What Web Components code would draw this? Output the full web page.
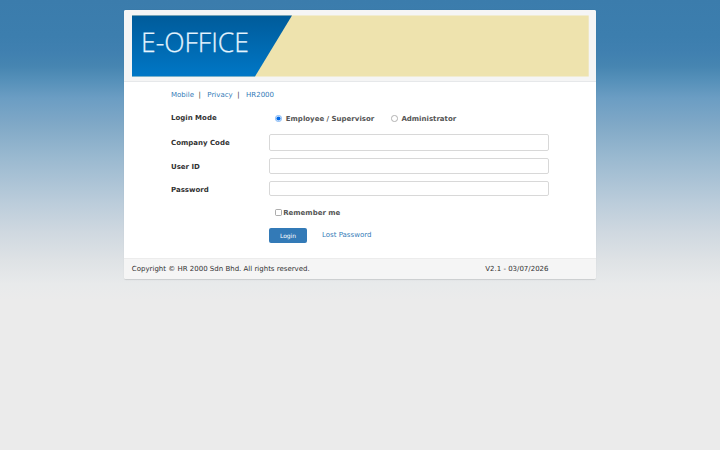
<!DOCTYPE html>
<html lang="en">
<head>
<meta charset="utf-8">
<title>E-OFFICE</title>
<style>
  html {
    min-height: 100%;
    background: #ebebeb;
  }

  body {
    margin: 0;
    height: 450px;
    overflow: hidden;
    font-family: "DejaVu Sans", sans-serif;
    font-size: 7px;
    line-height: 10px;
    color: #333;
    text-rendering: geometricPrecision;
    background: linear-gradient(#3b7cac 0, #3c7eae 36px, #4080b0 52px, #4685b1 66px, #5590b9 80px, #6b9dc3 98px, #81a9c7 126px, #9ab9d0 158px, #bccddb 204px, #cfd8e0 232px, #dee2e5 260px, #e8eaeb 284px, #ebebeb 300px);
  }
</style>
</head>
<body>
<login-panel>
  <office-banner slot="header"></office-banner>
  <nav-links></nav-links>
  <form-row class="mode" label="Login Mode" style="--h: 16px; --label-y: 0px">
    <radio-option checked style="--w: 115.6px">Employee / Supervisor</radio-option>
    <radio-option>Administrator</radio-option>
  </form-row>
  <form-row label="Company Code" style="--h: 17px; --gap: 8px"><text-field></text-field></form-row>
  <form-row label="User ID" style="--h: 16px; --gap: 7px; --label-y: 2px"><text-field></text-field></form-row>
  <form-row label="Password" style="--h: 15px; --gap: 7px; --label-y: 2px"><text-field></text-field></form-row>
  <form-row style="--h: 14px; --gap: 9px"><check-option>Remember me</check-option></form-row>
  <form-row style="--h: 15px; --gap: 9px"><login-actions></login-actions></form-row>
  <span slot="copyright">Copyright © HR 2000 Sdn Bhd. All rights reserved.</span>
  <span slot="version">V2.1 - 03/07/2026</span>
</login-panel>

<script>
class BaseElement extends HTMLElement {
  constructor() {
    super();
    this.attachShadow({ mode: 'open' });
    this.shadowRoot.innerHTML = this.render();
  }
}

class LoginPanel extends BaseElement {
  render() {
    return `
      <style>
        :host { display: flow-root; }
        .panel {
          box-sizing: border-box;
          display: flex;
          flex-direction: column;
          width: 472px;
          height: 269px;
          margin: 10px auto 0 124px;
          background: #fff;
          border-radius: 2px;
          box-shadow: 0 .5px 1px rgba(0, 0, 0, .12);
          overflow: hidden;
        }
        header {
          box-sizing: border-box;
          height: 72px;
          padding: 5px 7px 0 8px;
          background: #f5f5f5;
          border-bottom: 1px solid #e6e8ea;
        }
        main {
          flex: 1;
          padding: 7px 47px 0;
        }
        footer {
          box-sizing: border-box;
          display: flex;
          align-items: center;
          justify-content: space-between;
          height: 21px;
          padding: 0 47.5px 0 7.8px;
          background: #f5f5f5;
          border-top: 1px solid #ececec;
        }
      </style>
      <div class="panel">
        <header><slot name="header"></slot></header>
        <main><slot></slot></main>
        <footer><slot name="copyright"></slot><slot name="version"></slot></footer>
      </div>
    `;
  }
}

class OfficeBanner extends BaseElement {
  render() {
    return `
      <style>
        :host { display: block; height: 62px; }
        svg { display: block; }
        text { font: 300 27px "Open Sans", sans-serif; fill: #e6f5ff; stroke: #e6f5ff; stroke-width: .25; }
      </style>
      <svg width="457" height="62" viewBox="0 0 457 62">
        <defs>
          <linearGradient id="blue" x1="0" y1="0" x2="0" y2="1">
            <stop offset="0" stop-color="#005b9a"/>
            <stop offset="1" stop-color="#0077c6"/>
          </linearGradient>
        </defs>
        <rect y=".5" width="456.7" height="61" fill="#eee3ae"/>
        <path d="M0 .5H160L123 61.5H0z" fill="url(#blue)"/>
        <text x="9" y="36.5" textLength="108" lengthAdjust="spacingAndGlyphs">E-OFFICE</text>
      </svg>
    `;
  }
}

class NavLinks extends BaseElement {
  render() {
    return `
      <style>
        :host { display: flex; height: 12px; align-items: center; }
        a { color: #337ab7; text-decoration: none; }
        i { font-style: normal; margin: 0 6.5px 0 4.5px; }
      </style>
      <a>Mobile</a><i>|</i><a>Privacy</a><i>|</i><a>HR2000</a>
    `;
  }
}

class FormRow extends BaseElement {
  render() {
    return `
      <style>
        :host {
          display: flex;
          align-items: center;
          height: var(--h);
          margin-top: var(--gap, 9px);
        }
        b { width: 98px; flex: none; padding-top: var(--label-y, 0); }
        .field { flex: 1; display: flex; height: 100%; align-items: center; }
      </style>
      <b></b><div class="field"><slot></slot></div>
    `;
  }

  connectedCallback() {
    this.shadowRoot.querySelector('b').textContent = this.getAttribute('label') || '';
  }
}

class TextField extends BaseElement {
  render() {
    return `
      <style>
        :host { display: block; width: 280px; height: 100%; }
        input {
          box-sizing: border-box;
          display: block;
          width: 100%;
          height: 100%;
          padding: 3px 6px;
          font: inherit;
          background: #fff;
          border: 1px solid #d8d8d8;
          border-radius: 2px;
          outline: none;
        }
      </style>
      <input type="text">
    `;
  }
}

class RadioOption extends BaseElement {
  render() {
    return `
      <style>
        :host {
          display: flex;
          align-items: center;
          width: var(--w, auto);
          padding-left: 6px;
          box-sizing: border-box;
          font-weight: bold;
          color: #555;
        }
        svg { margin-right: 3.8px; flex: none; }
        circle { fill: #fff; stroke: #858585; stroke-width: .6; }
        .dot { display: none; }
        :host([checked]) circle { stroke: #3b8ff0; stroke-width: .6; }
        :host([checked]) .dot { display: block; fill: #0068e8; stroke: none; }
        span { padding-top: 1px; }
      </style>
      <svg width="7" height="7" viewBox="0 0 7 7">
        <circle cx="3.5" cy="3.5" r="3.1"/>
        <circle class="dot" cx="3.5" cy="3.5" r="2.1"/>
      </svg>
      <span><slot></slot></span>
    `;
  }
}

class CheckOption extends BaseElement {
  render() {
    return `
      <style>
        :host {
          display: flex;
          align-items: center;
          padding-left: 6px;
          font-weight: bold;
          color: #555;
        }
        svg { margin-right: 1.2px; }
        rect { fill: #fff; stroke: #767676; stroke-width: .6; }
        span { padding-top: 1px; }
      </style>
      <svg width="7" height="7" viewBox="0 0 7 7">
        <rect x=".5" y=".5" width="6" height="6" rx="1"/>
      </svg>
      <span><slot></slot></span>
    `;
  }
}

class LoginActions extends BaseElement {
  render() {
    return `
      <style>
        :host { display: flex; align-items: center; height: 100%; }
        button {
          box-sizing: border-box;
          width: 38px;
          height: 15px;
          margin-right: 15px;
          padding: 0 0 1px;
          font: 6px "DejaVu Sans", sans-serif;
          color: #fff;
          background: #337ab7;
          border: 0;
          border-radius: 2px;
        }
        a { color: #337ab7; text-decoration: none; padding-bottom: 1px; }
      </style>
      <button type="button">Login</button><a>Lost Password</a>
    `;
  }
}

customElements.define('login-panel', LoginPanel);
customElements.define('office-banner', OfficeBanner);
customElements.define('nav-links', NavLinks);
customElements.define('form-row', FormRow);
customElements.define('text-field', TextField);
customElements.define('radio-option', RadioOption);
customElements.define('check-option', CheckOption);
customElements.define('login-actions', LoginActions);
</script>
</body>
</html>
